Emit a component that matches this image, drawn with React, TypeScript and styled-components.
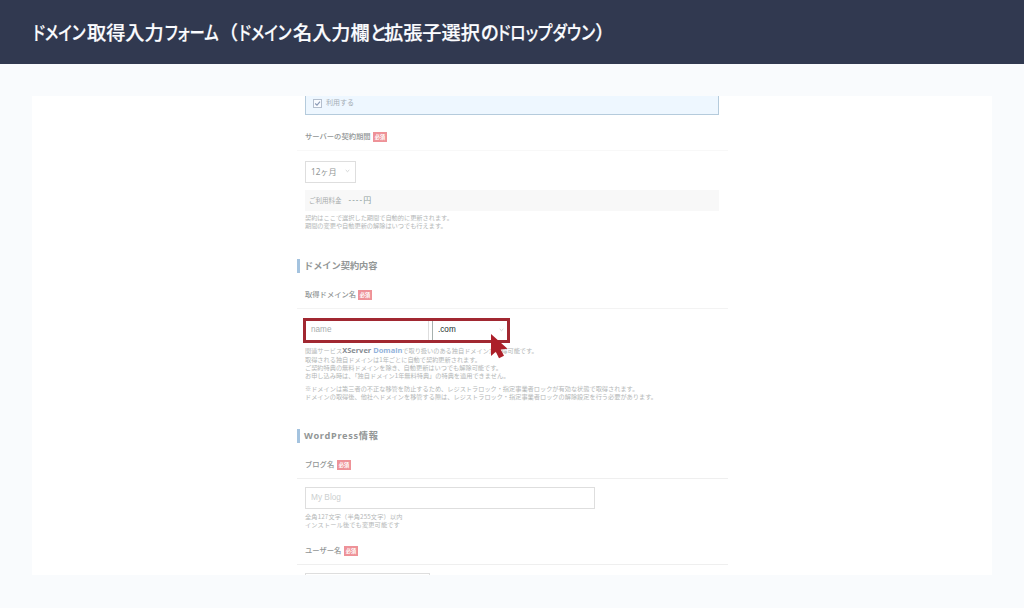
import React from "react";
import styled, { createGlobalStyle } from "styled-components";

const Global = createGlobalStyle`
  * { box-sizing: border-box; }
  body { margin: 0; background: #f9fbfd; font-family: "Noto Sans", "Noto Sans CJK JP", sans-serif; }
`;

const Page = styled.div`
  width: 1024px;
  height: 608px;
  overflow: hidden;
`;

const Header = styled.header`
  height: 64px;
  padding: 0 32px;
  display: flex;
  align-items: center;
  background: #313950;
  color: #fbfcff;
`;

const Title = styled.h1`
  display: flex;
  margin: 0;
  padding-bottom: 1px;
  font: 500 19.2px/28px "Noto Sans CJK JP", sans-serif;
  -webkit-text-stroke: 0.2px currentColor;
  white-space: nowrap;
`;

const Run = styled.span<{ $w: number; $scale: number }>`
  flex: none;
  width: ${(p) => p.$w}px;
  padding-left: ${(p) => (p.$scale < 1 ? 1 : 0)}px;
  transform: scaleX(${(p) => p.$scale});
  transform-origin: 0 50%;
  font-feature-settings: ${(p) => (p.$scale < 1 ? '"palt"' : "normal")};
`;

const Card = styled.main`
  width: 960px;
  height: 479px;
  margin: 32px;
  padding-left: 265px;
  overflow: hidden;
  background: #fff;
`;

const Form = styled.div`
  width: 431px;
  display: flex;
  flex-direction: column;
`;

const UseBox = styled.div`
  height: 19px;
  width: 414px;
  margin-left: 8px;
  padding: 0 0 4px 7px;
  display: flex;
  align-items: center;
  gap: 4px;
  border: 1px solid #b5cbdc;
  border-top: 0;
  background: #eef7ff;
  color: #a5adb5;
  font-size: 7px;
  line-height: 10px;
`;

const Label = styled.div<{ $top: number; $gap: number; $line?: string }>`
  height: ${(p) => 10 + p.$gap}px;
  margin-top: ${(p) => p.$top}px;
  padding-left: 8px;
  display: flex;
  align-items: flex-start;
  gap: 2px;
  border-bottom: 1px solid ${(p) => p.$line ?? "#f3f3f3"};
  color: #929696;
  font-size: 7.3px;
  line-height: 9px;
  font-weight: 500;
  white-space: nowrap;
`;

const LabelText = styled.span<{ $w: number }>`
  width: ${(p) => p.$w}px;
`;

const Badge = styled.span`
  width: 14px;
  height: 10px;
  background: #ee9298;
  color: #fff;
  font-size: 5.2px;
  line-height: 10px;
  font-weight: 700;
  text-align: center;
`;

const Heading = styled.h2<{ $top: number; $spacing?: number }>`
  height: 14px;
  margin: ${(p) => p.$top}px 0 0;
  padding-left: 4px;
  border-left: 3px solid #a4c3df;
  color: #929696;
  font-size: 9.2px;
  line-height: 14px;
  font-weight: 700;
  letter-spacing: ${(p) => p.$spacing ?? 0}px;
`;

const Field = styled.div<{ $w: number; $h: number; $top: number }>`
  width: ${(p) => p.$w}px;
  height: ${(p) => p.$h}px;
  margin: ${(p) => p.$top}px 0 0 8px;
  padding: 0 5px 2px;
  display: flex;
  flex: none;
  align-items: center;
  justify-content: space-between;
  border: 1px solid #dedede;
  color: #929696;
  font-size: 8.2px;
`;

const Placeholder = styled.span`
  color: #cccfcf;
  font: 8.3px "Liberation Sans", sans-serif;
`;

const Price = styled.div`
  width: 414px;
  height: 21px;
  margin: 7px 0 0 8px;
  padding: 0 0 2px 4px;
  display: flex;
  align-items: center;
  gap: 7px;
  background: #f8f8f8;
  color: #a7abab;
  font-size: 6.5px;
`;

const Amount = styled.span`
  color: #90a3a0;
  font-size: 8px;
  letter-spacing: 1.1px;
`;

const Note = styled.p<{ $top: number; $lh?: number; $spacing?: number }>`
  margin: ${(p) => p.$top}px 0 0 8px;
  color: #b4b7b7;
  font: 6.2px/${(p) => p.$lh ?? 8.35}px "Noto Sans CJK JP", sans-serif;
  letter-spacing: ${(p) => p.$spacing ?? 0}px;
  white-space: nowrap;
`;

const Brand = styled.b`
  color: #878c93;
  font: 700 7.5px/8px "Noto Sans", sans-serif;
  span { color: #93b3dc; }
`;

const DomainBox = styled.div`
  position: relative;
  width: 207px;
  height: 25px;
  margin: 9px 0 0 6px;
  display: flex;
  border: 3px solid #a12831;
  font: 8.2px/18px "Liberation Sans", sans-serif;
`;

const NameInput = styled.div`
  width: 123px;
  padding-left: 5px;
  border-right: 1px solid #dedede;
  color: #a9adad;
`;

const Extension = styled.div`
  flex: 1;
  margin-left: 3px;
  padding: 0 3px 0 5px;
  display: flex;
  align-items: center;
  justify-content: space-between;
  border-left: 1px solid #a6b0ae;
  color: #23302e;
`;

const Pointer = styled.svg`
  position: absolute;
  left: 182px;
  top: 11px;
`;

const Check = () => (
  <svg width="9" height="9" viewBox="0 0 9 9" fill="none">
    <rect x=".5" y=".5" width="8" height="8" fill="#f8fbff" stroke="#b4bfce" />
    <path d="M2.2 4.5 4 6.2 7 2.6" stroke="#8798b5" strokeWidth="1.1" />
  </svg>
);

const Chevron = () => (
  <svg width="5" height="4" viewBox="0 0 5 4" fill="none">
    <path d="m.7 1 1.8 1.7L4.3 1" stroke="#c6c9c9" strokeWidth=".8" />
  </svg>
);

const TITLE: [string, number, number][] = [
  ["ドメイン", 55, 0.8],
  ["取得入力", 77, 1],
  ["フォーム", 55, 0.8],
  ["（", 19, 1],
  ["ドメイン", 55, 0.8],
  ["名入力欄", 76, 1],
  ["と", 15, 0.95],
  ["拡張子選択", 96, 1],
  ["の", 17, 0.95],
  ["ドロップダウン", 98, 0.82],
  ["）", 19, 1],
];

const Required = ({ text, w, top, gap, line }: { text: string; w: number; top: number; gap: number; line?: string }) => (
  <Label $top={top} $gap={gap} $line={line}>
    <LabelText $w={w}>{text}</LabelText>
    <Badge>必須</Badge>
  </Label>
);

export default function App() {
  return (
    <Page lang="ja">
      <Global />
      <Header>
        <Title>
          {TITLE.map(([text, w, scale], i) => (
            <Run key={i} $w={w} $scale={scale}>{text}</Run>
          ))}
        </Title>
      </Header>
      <Card>
        <Form>
          <UseBox><Check />利用する</UseBox>
          <Required text="サーバーの契約期間" w={66} top={17} gap={9} line="#f8f8f8" />
          <Field $w={51} $h={22} $top={10}>12ヶ月<Chevron /></Field>
          <Price>ご利用料金<Amount>----円</Amount></Price>
          <Note $top={3}>
            契約はここで選択した期間で自動的に更新されます。<br />
            期間の変更や自動更新の解除はいつでも行えます。
          </Note>
          <Heading $top={28}>ドメイン契約内容</Heading>
          <Required text="取得ドメイン名" w={51} top={17} gap={9} />
          <DomainBox>
            <NameInput>name</NameInput>
            <Extension>.com<Chevron /></Extension>
            <Pointer width="21" height="29" viewBox="0 0 21 29">
              <path d="M3 2v22l4.8-4.2 3.2 6.4 5-2.4-3.3-6.2 6.8-.8z" fill="#ac1f29" />
            </Pointer>
          </DomainBox>
          <Note $top={3.5}>
            関連サービス<Brand>XServer <span>Domain</span></Brand>で取り扱いのある独自ドメインが取得可能です。<br />
            取得される独自ドメインは1年ごとに自動で契約更新されます。<br />
            ご契約特典の無料ドメインを除き、自動更新はいつでも解除可能です。<br />
            お申し込み時は、「独自ドメイン1年無料特典」の特典を適用できません。
          </Note>
          <Note $top={4}>
            ※ドメインは第三者の不正な移管を防止するため、レジストラロック・指定事業者ロックが有効な状態で取得されます。<br />
            ドメインの取得後、他社へドメインを移管する際は、レジストラロック・指定事業者ロックの解除設定を行う必要があります。
          </Note>
          <Heading $top={28} $spacing={0.7}>WordPress情報</Heading>
          <Required text="ブログ名" w={30} top={17} gap={9} line="#efefef" />
          <Field $w={290} $h={22} $top={8}><Placeholder>My Blog</Placeholder></Field>
          <Note $top={4} $lh={8} $spacing={0.15}>
            全角127文字（半角255文字）以内<br />
            インストール後でも変更可能です
          </Note>
          <Required text="ユーザー名" w={37} top={17} gap={9} line="#efefef" />
          <Field $w={125} $h={22} $top={8} />
        </Form>
      </Card>
    </Page>
  );
}
